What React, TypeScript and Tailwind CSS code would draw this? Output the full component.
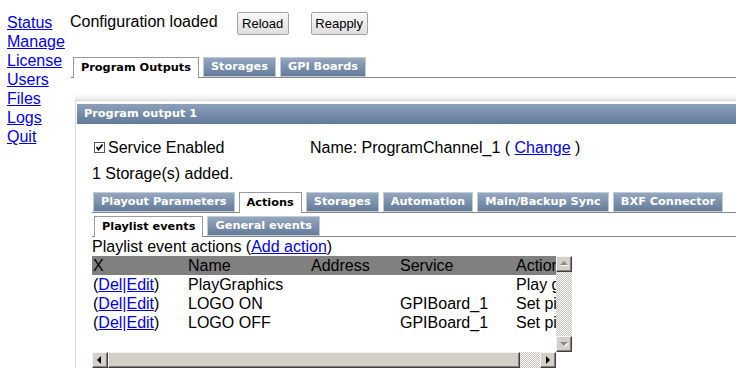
import React from 'react';

const NAV = ['Status', 'Manage', 'License', 'Users', 'Files', 'Logs', 'Quit'];

const ROWS = [
  { name: 'PlayGraphics', address: '', service: '', action: 'Play graphics' },
  { name: 'LOGO ON', address: '', service: 'GPIBoard_1', action: 'Set pin' },
  { name: 'LOGO OFF', address: '', service: 'GPIBoard_1', action: 'Set pin' },
];

function Tab({ label, active }: { label: string; active?: boolean }) {
  if (active) {
    return (
      <div className="relative -mb-px h-[21px] shrink-0 border border-b-0 border-[#9a9a9a] bg-white px-[7px] pt-[2px] text-[11.3px] leading-[16px] font-bold whitespace-nowrap text-black">
        {label}
      </div>
    );
  }
  return (
    <div className="h-[20px] shrink-0 border border-[#c3cbd7] bg-gradient-to-b from-[#95a7c0] to-[#637b9a] px-[7px] pt-[1px] text-[11.3px] leading-[16px] font-bold whitespace-nowrap text-white">
      {label}
    </div>
  );
}

function TabRow({ tabs, active, className }: { tabs: string[]; active: string; className?: string }) {
  return (
    <div className={'flex items-end gap-[4px] border-b border-[#888] font-["DejaVu_Sans",sans-serif] ' + (className ?? '')}>
      {tabs.map(t => (
        <Tab key={t} label={t} active={t === active} />
      ))}
    </div>
  );
}

function Arrow({ dir, disabled }: { dir: 'left' | 'right' | 'up' | 'down'; disabled?: boolean }) {
  const pts = {
    left: '6,2 6,10 2,6',
    right: '3,2 3,10 7,6',
    up: '1,7 9,7 5,3',
    down: '1,4 9,4 5,8',
  }[dir];
  return (
    <svg width="10" height="12" viewBox="0 0 10 12">
      {disabled && <polygon points={pts} fill="#ffffff" transform="translate(1,1)" />}
      <polygon points={pts} fill={disabled ? '#8a8a8a' : '#000'} />
    </svg>
  );
}

function SbButton({ children }: { children: React.ReactNode }) {
  return (
    <div className="flex h-[16px] w-[16px] shrink-0 items-center justify-center border border-t-[#f4f4f4] border-l-[#f4f4f4] border-r-[#404040] border-b-[#404040] bg-[#d4d0c8] shadow-[inset_-1px_-1px_#808080]">
      {children}
    </div>
  );
}

function LinkText({ children }: { children: React.ReactNode }) {
  return <span className="text-[#0000ee] underline">{children}</span>;
}

export default function App() {
  return (
    <div className="flex h-[387px] w-[736px] overflow-hidden bg-white font-['Liberation_Sans',Arial,sans-serif] text-[16px] text-black">
      {/* left nav */}
      <div className="w-[70px] shrink-0 pt-[13px] pl-[7px] leading-[19px]">
        {NAV.map(n => (
          <div key={n}>
            <LinkText>{n}</LinkText>
          </div>
        ))}
      </div>

      {/* main */}
      <div className="min-w-0 flex-1">
        <div className="flex items-start pt-[12px]">
          <span className="leading-[19px]">Configuration loaded</span>
          <button className="ml-[19px] h-[23px] w-[52px] rounded-[2px] border border-[#a3a3a3] bg-gradient-to-b from-[#f8f8f8] to-[#dedede] text-[13px]">
            Reload
          </button>
          <button className="ml-[22px] h-[23px] w-[57px] rounded-[2px] border border-[#a3a3a3] bg-gradient-to-b from-[#f8f8f8] to-[#dedede] text-[13px]">
            Reapply
          </button>
        </div>

        <TabRow className="mt-[22px] ml-[1px] pl-[2px]" tabs={['Program Outputs', 'Storages', 'GPI Boards']} active="Program Outputs" />

        {/* panel */}
        <div className="mt-[15px] ml-[5px] h-[7px] bg-gradient-to-b from-white to-[#ececec]" />
        <div className="ml-[5px] border-t border-l border-[#d8d8d8] pt-[3px] pl-[1px]">
          <div className="h-[20px] bg-gradient-to-b from-[#8c9fba] to-[#627b9a] pl-[7px] font-['DejaVu_Sans',sans-serif] text-[11.3px] leading-[20px] font-bold text-white">
            Program output 1
          </div>

          <div className="pl-[15px]">
            <div className="mt-[14px] flex leading-[19px]">
              <div className="flex w-[218px] items-center">
                <svg className="ml-[2px] mr-[3px]" width="11" height="11" viewBox="0 0 11 11">
                  <rect x="0.5" y="0.5" width="10" height="10" fill="#fff" stroke="#555" />
                  <polyline points="2.5,5 4.5,7.5 8.5,2.5" fill="none" stroke="#000" strokeWidth="1.8" />
                </svg>
                <span>Service Enabled</span>
              </div>
              <div>
                Name: ProgramChannel_1 ( <LinkText>Change</LinkText> )
              </div>
            </div>
            <div className="mt-[7px] leading-[19px]">1 Storage(s) added.</div>

            <TabRow
              className="mt-[9px] pl-[1px]"
              tabs={['Playout Parameters', 'Actions', 'Storages', 'Automation', 'Main/Backup Sync', 'BXF Connector']}
              active="Actions"
            />
            <TabRow className="mt-[3px] pl-[2px]" tabs={['Playlist events', 'General events']} active="Playlist events" />

            <div className="leading-[19px]">
              Playlist event actions (<LinkText>Add action</LinkText>)
            </div>

            {/* table with classic scrollbars */}
            <div className="grid w-[480px] grid-cols-[464px_16px] grid-rows-[96px_16px]">
              <div className="overflow-hidden">
                <div className="grid w-[640px] grid-cols-[95px_123px_89px_116px_217px] leading-[19px] whitespace-nowrap">
                  {['X', 'Name', 'Address', 'Service', 'Action'].map(h => (
                    <div key={h} className="bg-[#808080] pl-px">
                      {h}
                    </div>
                  ))}
                  {ROWS.map(r => (
                    <React.Fragment key={r.name}>
                      <div className="pl-px">
                        (<LinkText>Del|Edit</LinkText>)
                      </div>
                      <div className="pl-px">{r.name}</div>
                      <div className="pl-px">{r.address}</div>
                      <div className="pl-px">{r.service}</div>
                      <div className="pl-px">{r.action}</div>
                    </React.Fragment>
                  ))}
                </div>
              </div>

              <div className="flex flex-col">
                <SbButton>
                  <Arrow dir="up" disabled />
                </SbButton>
                <div className="flex-1 bg-[repeating-conic-gradient(#c8c4bc_0%_25%,#ffffff_0%_50%)] bg-size-[2px_2px]" />
                <SbButton>
                  <Arrow dir="down" disabled />
                </SbButton>
              </div>

              <div className="flex">
                <SbButton>
                  <Arrow dir="left" />
                </SbButton>
                <div className="h-[16px] w-[412px] border border-t-[#f4f4f4] border-l-[#f4f4f4] border-r-[#404040] border-b-[#404040] bg-[#d4d0c8] shadow-[inset_-1px_-1px_#808080]" />
                <div className="flex-1 bg-[repeating-conic-gradient(#c8c4bc_0%_25%,#ffffff_0%_50%)] bg-size-[2px_2px]" />
                <SbButton>
                  <Arrow dir="right" />
                </SbButton>
              </div>
              <div className="bg-white" />
            </div>
          </div>
        </div>
      </div>
    </div>
  );
}
